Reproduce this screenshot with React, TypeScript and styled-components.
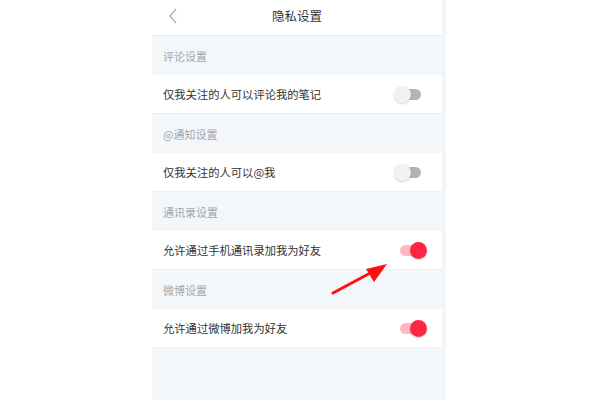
import React from "react";
import styled, { createGlobalStyle } from "styled-components";

const Global = createGlobalStyle`
  html, body { margin: 0; padding: 0; background: #ffffff; }
  body { font-family: "Noto Sans CJK SC", "Noto Sans", sans-serif; }
  * { box-sizing: border-box; }
`;

const Page = styled.div`
  position: relative;
  width: 600px;
  height: 400px;
  overflow: hidden;
  background: #ffffff;
  display: flex;
  padding-left: 152px;
`;

const Phone = styled.div`
  width: 290px;
  height: 400px;
  background: #f4f7fa;
  display: flex;
  flex-direction: column;
`;

const Strip = styled.div`
  width: 4px;
  height: 400px;
  background: #f3f6f9;
`;

const Header = styled.div`
  height: 36px;
  background: #ffffff;
  border-bottom: 1px solid #e9ecef;
  display: flex;
  align-items: center;
  justify-content: center;
  position: relative;
`;

const Back = styled.svg`
  position: absolute;
  left: 16px;
  top: 8px;
`;

const Title = styled.div`
  font-size: 12.5px;
  color: #333333;
  margin-top: -4px;
`;

const SectionTitle = styled.div`
  height: 39px;
  padding-left: 11px;
  display: flex;
  align-items: center;
  font-size: 11px;
  color: #a3a6a9;
  background: #f4f7fa;
`;

const Row = styled.div`
  height: 39px;
  background: #ffffff;
  border-bottom: 1px solid #eceef0;
  display: flex;
  align-items: center;
  justify-content: space-between;
  padding-left: 11px;
  padding-right: 15px;
  font-size: 11.3px;
  color: #333333;
`;

const Toggle = styled.div<{ $on: boolean }>`
  position: relative;
  width: 33px;
  height: 17px;
  &::before {
    content: "";
    position: absolute;
    left: 6px;
    right: 6px;
    top: 3px;
    height: 11px;
    border-radius: 6px;
    background: ${(p) => (p.$on ? "#ffb8c2" : "#b3b3b3")};
  }
  &::after {
    content: "";
    position: absolute;
    top: 0;
    ${(p) => (p.$on ? "right: 0;" : "left: 0;")}
    width: 17px;
    height: 17px;
    border-radius: 50%;
    background: ${(p) => (p.$on ? "#ff2545" : "#f1f1f1")};
    box-shadow: 0 1px 2px rgba(0, 0, 0, 0.18);
  }
`;

const Arrow = styled.svg`
  position: absolute;
  left: 0;
  top: 0;
  pointer-events: none;
`;

const sections = [
  { title: "评论设置", label: "仅我关注的人可以评论我的笔记", on: false },
  { title: "@通知设置", label: "仅我关注的人可以@我", on: false },
  { title: "通讯录设置", label: "允许通过手机通讯录加我为好友", on: true },
  { title: "微博设置", label: "允许通过微博加我为好友", on: true },
];

export default function App() {
  return (
    <>
      <Global />
      <Page>
        <Phone>
          <Header>
            <Back width="10" height="16" viewBox="0 0 10 16">
              <path d="M8 1 L2 8 L8 15" fill="none" stroke="#b5b5b5" strokeWidth="1.4" />
            </Back>
            <Title>隐私设置</Title>
          </Header>
          {sections.map((s) => (
            <React.Fragment key={s.title}>
              <SectionTitle>{s.title}</SectionTitle>
              <Row>
                <span>{s.label}</span>
                <Toggle $on={s.on} />
              </Row>
            </React.Fragment>
          ))}
        </Phone>
        <Strip />
        <Arrow width="600" height="400" viewBox="0 0 600 400">
          <line x1="333" y1="293" x2="374" y2="271" stroke="#ff1010" strokeWidth="3" strokeLinecap="round" />
          <polygon points="387,264 366,269 374,282" fill="#ff1010" />
        </Arrow>
      </Page>
    </>
  );
}
